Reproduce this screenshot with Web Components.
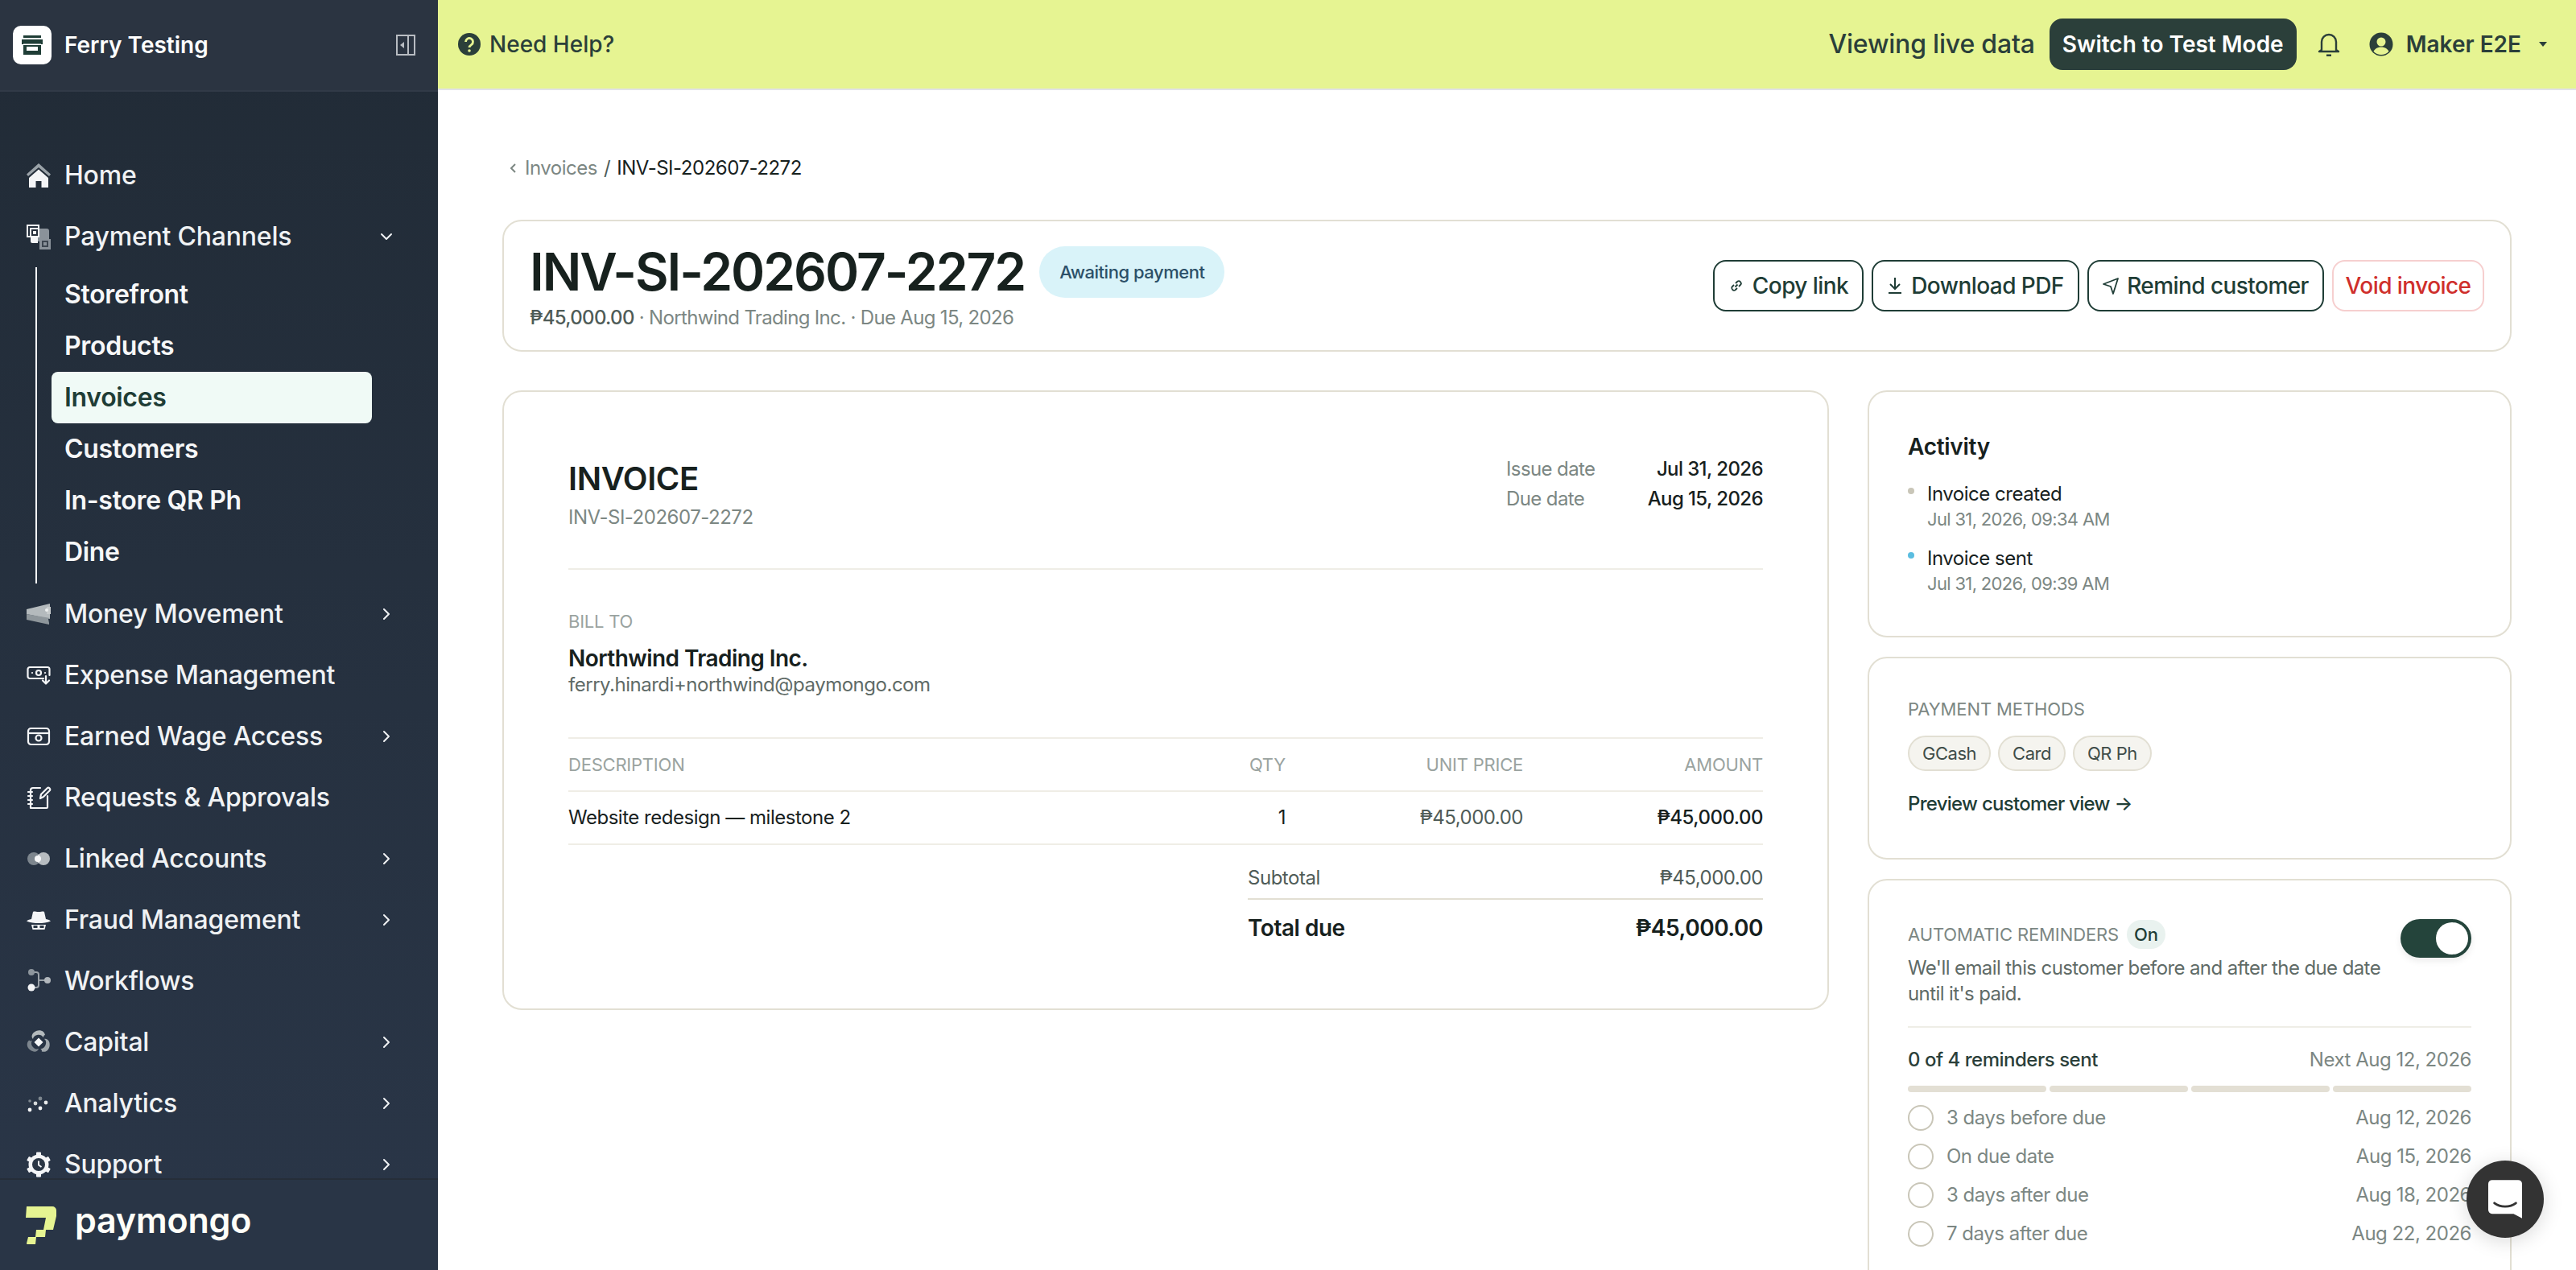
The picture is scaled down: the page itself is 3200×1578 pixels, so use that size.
<!DOCTYPE html>
<html><head><meta charset="utf-8"><title>Invoice</title>
<style>html,body{margin:0;height:100%;overflow:hidden;background:#fff;font-family:Inter,"Noto Sans",sans-serif}</style>
</head><body>
<app-shell></app-shell>
<script>
const BLADE='M13 2c5-2 10 0 11 5-1 0-2 1-2 3-2-3-5-4-8-3-3 .5-5 3-5 5-3-3-1-8 4-10z';
const ICONS={
home:`<path d="M16 1 1 14.500l2 2.500L16 6l13 11 2-2.500z" fill="#9aa2a8"/><path d="M16 8.500 4 19v12h8.500v-8h7v8H28V19z" fill="#f4f5f7"/>`,
channels:`<rect x="13" y="6" width="16" height="16" rx="3" fill="#8a929a"/><rect x="2" y="2" width="14" height="14" fill="none" stroke="#f4f5f7" stroke-width="2"/><rect x="5" y="5" width="12" height="12" fill="#f4f5f7"/><path d="M6 15h9v9H8a2 2 0 0 1-2-2z" fill="#f4f5f7"/><rect x="8" y="8" width="6" height="6" fill="none" stroke="#262f3b" stroke-width="2"/><rect x="17" y="19" width="14" height="13" fill="#8a929a"/><rect x="21" y="22" width="6" height="6" fill="none" stroke="#3d4650" stroke-width="2"/>`,
money:`<path d="M1 10 30 3v19L1 16z" fill="#b4babd"/><path d="M1 16l29 5-2 1 1 5v2L1 23z" fill="#8e969b"/><path d="M26 7h5v9h-5z" fill="#c8cccd"/><circle cx="26" cy="11" r="2" fill="#eef0f0"/>`,
expense:`<g fill="none" stroke="#f4f5f7" stroke-width="2.2" stroke-linecap="round" stroke-linejoin="round"><path d="M22 20H5a2.500 2.500 0 0 1-2.500-2.500v-9A2.500 2.500 0 0 1 5 6h22a2.500 2.500 0 0 1 2.500 2.500V16"/><circle cx="16" cy="13" r="3"/><path d="M8 13h.01M24 13h.01M25 17v9M21 22.500l4 4 4-4"/></g>`,
wage:`<g fill="none" stroke="#f4f5f7" stroke-width="2.200"><rect x="3" y="6" width="26" height="20" rx="3.500"/><path d="M3 12h26"/><circle cx="16" cy="18" r="3.500"/></g>`,
req:`<g fill="none" stroke="#f4f5f7" stroke-width="2.200" stroke-linecap="round" stroke-linejoin="round"><path d="M18 4H9a3 3 0 0 0-3 3v22a0 0 0 0 0 0 0h20a1 1 0 0 0 1-1V14"/><path d="M3 9h5M3 14h5M3 19h5M3 24h5"/><path d="M18 17l1-5 8-8c1.500-1 4 1 3 3l-8 8z"/></g>`,
linked:`<circle cx="10" cy="16" r="8" fill="#7d868e"/><circle cx="22" cy="16" r="8" fill="#b7bcc0"/><path d="M16 10.700a8 8 0 0 1 0 10.600 8 8 0 0 1 0-10.600z" fill="#f6f7f8"/><circle cx="15" cy="16" r="4" fill="#f6f7f8"/>`,
fraud:`<path d="M9 6c2-1 3 0 7 0s5-1 7 0l2 9c3 .500 5 1.500 6 2.500-4 2-10 2.500-15 2.500S5 19.500 1 17.500C2 16.500 4 15.500 7 15z" fill="#f4f5f7"/><path d="M7 22h18l-1.500 6h-15z" fill="#f4f5f7"/><rect x="9.500" y="23" width="5" height="3" fill="#2a3645"/><rect x="17.500" y="23" width="5" height="3" fill="#2a3645"/>`,
flow:`<path d="M10 5h3a3 3 0 0 1 3 3v13a3 3 0 0 1-3 3h-3M16 15h8" fill="none" stroke="#9aa1a8" stroke-width="2"/><circle cx="7" cy="5" r="4" fill="#8d959d"/><circle cx="27" cy="15" r="4" fill="#b2b7bc"/><circle cx="7" cy="24" r="4.500" fill="#f4f5f7"/>`,
capital:`<path d="${BLADE}" fill="#b4babd"/><path d="${BLADE}" fill="#a1a8ad" transform="rotate(120 16 16)"/><path d="${BLADE}" fill="#7d868e" transform="rotate(240 16 16)"/><path d="M16 10.500l5.500 5.500-5.500 5.500-5.500-5.500z" fill="#f6f7f8"/>`,
analytics:`<circle cx="5" cy="24" r="2.400" fill="#f4f5f7"/><circle cx="12" cy="16" r="2.400" fill="#d5d8da"/><circle cx="18" cy="22" r="2.400" fill="#f4f5f7"/><circle cx="18" cy="10" r="2.400" fill="#7d868e"/><circle cx="5" cy="13" r="1.800" fill="#7d868e"/><circle cx="25" cy="15" r="2.400" fill="#e8eaeb"/>`,
support:`<g fill="#f4f5f7"><circle cx="16" cy="16" r="12.500"/><g><rect x="13" y="0.500" width="6" height="6" rx="1"/><rect x="13" y="25.500" width="6" height="6" rx="1"/><rect x="13" y="0.500" width="6" height="6" rx="1" transform="rotate(60 16 16)"/><rect x="13" y="25.500" width="6" height="6" rx="1" transform="rotate(60 16 16)"/><rect x="13" y="0.500" width="6" height="6" rx="1" transform="rotate(120 16 16)"/><rect x="13" y="25.500" width="6" height="6" rx="1" transform="rotate(120 16 16)"/></g></g><circle cx="16" cy="16" r="8" fill="#2a3645"/><path d="M16 11.500v5l3.500 2.500" fill="none" stroke="#f4f5f7" stroke-width="2"/>`
};

class NavItem extends HTMLElement{
 connectedCallback(){ if(this.shadowRoot)return;
  const r=this.attachShadow({mode:'open'});
  const ic=this.getAttribute('icon'),ch=this.getAttribute('chev');
  r.innerHTML=`<style>
  :host{display:flex;align-items:center;height:76px;padding-left:32px;padding-right:56px;gap:16px;color:#f0f2f4;font:500 32px/40px Inter,sans-serif;letter-spacing:-.007em;flex:none}
  svg.i{width:32px;height:32px;flex:none}
  span{flex:1;white-space:nowrap}
  svg.c{width:20px;height:20px;flex:none;margin-right:-2px}
  </style><svg class="i" viewBox="0 0 32 32">${ICONS[ic]||''}</svg><span><slot></slot></span>${ch?`<svg class="c" viewBox="0 0 20 20" fill="none" stroke="#f0f2f4" stroke-width="2" stroke-linecap="round" stroke-linejoin="round"><path d="${ch==='down'?'M4 7l6 6 6-6':'M7 4l6 6-6 6'}"/></svg>`:''}`;
 }
}
customElements.define('nav-item',NavItem);
class SubItem extends HTMLElement{
 connectedCallback(){ if(this.shadowRoot)return;
  const r=this.attachShadow({mode:'open'});
  r.innerHTML=`<style>
  :host{display:flex;align-items:center;height:64px;width:398px;box-sizing:border-box;padding-left:16px;border-radius:8px;color:#f6f7f8;font:600 32px/40px Inter,sans-serif;letter-spacing:-.01em;white-space:nowrap}
  :host([active]){background:#f0faf6;color:#1f3d36}
  </style><slot></slot>`;
 }
}
customElements.define('sub-item',SubItem);

class SideBar extends HTMLElement{
 connectedCallback(){ if(this.shadowRoot)return;
  const r=this.attachShadow({mode:'open'});
  r.innerHTML=`<style>
  :host{display:flex;flex-direction:column;width:544px;height:100%;background:linear-gradient(#212b36,#2a3648);overflow:hidden;flex:none}
  header{height:112px;flex:none;display:flex;align-items:center;padding:0 28px 0 16px;gap:16px;background:#2b3441;border-bottom:2px solid #313a47;box-sizing:content-box}
  .logo{width:48px;height:48px;border-radius:10px;background:#fff;display:flex;align-items:center;justify-content:center;flex:none}
  .name{flex:1;color:#fff;font:600 28px/36px Inter,sans-serif;white-space:nowrap}
  nav{flex:1;min-height:0;overflow:hidden;padding-top:66px;display:flex;flex-direction:column}
  .subs{position:relative;display:flex;flex-direction:column;margin-left:64px;padding-top:2px;padding-bottom:7px;flex:none}
  .subs::before{content:"";position:absolute;left:-20px;top:0;bottom:0;width:2px;background:#f4f5f7}
  footer{flex:none;height:114px;border-top:2px solid #262e39;background:#293546;display:flex;align-items:center;padding-left:32px;gap:22px;box-sizing:border-box}
  .pm{color:#fffef8;font:600 43px/50px Inter,sans-serif;letter-spacing:-.2px;margin-top:-12px}
  </style>
  <header><div class="logo"><svg width="32" height="32" viewBox="0 0 32 32"><path d="M5 4h22v3H5zM3 9h26v6h-2v13H5V15H3z" fill="#1f3d36"/><rect x="9" y="18" width="14" height="5" fill="#fff"/><rect x="5" y="14.500" width="22" height="1.500" fill="#fff"/></svg></div>
  <div class="name">Ferry Testing</div>
  <svg width="24" height="26" viewBox="0 0 24 26" fill="none"><rect x="1" y="1" width="22" height="24" stroke="#b8bcc2" stroke-width="2"/><path d="M15 1v24" stroke="#b8bcc2" stroke-width="2"/><path d="M10 9v8l-5-4z" fill="#b8bcc2"/></svg></header>
  <nav>
   <nav-item icon="home">Home</nav-item>
   <nav-item icon="channels" chev="down">Payment Channels</nav-item>
   <div class="subs"><sub-item>Storefront</sub-item><sub-item>Products</sub-item><sub-item active>Invoices</sub-item><sub-item>Customers</sub-item><sub-item>In-store QR Ph</sub-item><sub-item>Dine</sub-item></div>
   <nav-item icon="money" chev="right">Money Movement</nav-item>
   <nav-item icon="expense">Expense Management</nav-item>
   <nav-item icon="wage" chev="right">Earned Wage Access</nav-item>
   <nav-item icon="req">Requests &amp; Approvals</nav-item>
   <nav-item icon="linked" chev="right">Linked Accounts</nav-item>
   <nav-item icon="fraud" chev="right">Fraud Management</nav-item>
   <nav-item icon="flow">Workflows</nav-item>
   <nav-item icon="capital" chev="right">Capital</nav-item>
   <nav-item icon="analytics" chev="right">Analytics</nav-item>
   <nav-item icon="support" chev="right">Support</nav-item>
  </nav>
  <footer><svg width="39" height="49" viewBox="0 0 39 49"><path d="M1 1h32a5 5 0 0 1 5 5v7l-4 17h-9l-1 9H13l-1 9H2a1 1 0 0 1-1-1l2-8h9l1-9h9l3-15H0z" fill="#e6f492"/></svg><div class="pm">paymongo</div></footer>`;
 }
}
customElements.define('side-bar',SideBar);

class TopBar extends HTMLElement{
 connectedCallback(){ if(this.shadowRoot)return;
  const r=this.attachShadow({mode:'open'});
  r.innerHTML=`<style>
  :host{display:flex;align-items:center;height:110px;flex:none;background:#e6f492;border-bottom:2px solid #e1e3e6;padding:0 36px 0 24px;color:#2b3f3a;font-family:Inter,sans-serif}
  .help{display:flex;align-items:center;gap:10px;font:500 28px/36px Inter,sans-serif;flex:1}
  .live{font:500 32px/40px Inter,sans-serif;margin-right:18px;letter-spacing:-.2px}
  .sw{background:#2b3f3a;color:#fff;height:64px;width:307px;border-radius:16px;font:600 28px/64px Inter,sans-serif;text-align:center;white-space:nowrap}
  .bell{margin:0 36px 0 26px}
  .maker{font:600 28px/36px Inter,sans-serif;margin-left:16px;white-space:nowrap}
  .caret{margin-left:22px}
  </style>
  <div class="help"><svg width="30" height="30" viewBox="0 0 30 30"><circle cx="15" cy="15" r="14" fill="#2b3f3a"/><path d="M10.500 12a4.500 4.500 0 1 1 7 3.700c-1.500 1-2.500 1.800-2.500 3.300" fill="none" stroke="#e6f492" stroke-width="2.800"/><circle cx="15" cy="23" r="1.800" fill="#e6f492"/></svg><span>Need Help?</span></div>
  <div class="live">Viewing live data</div><div class="sw">Switch to Test Mode</div>
  <svg class="bell" width="28" height="30" viewBox="0 0 28 30" fill="none" stroke="#2b3f3a" stroke-width="2.400" stroke-linejoin="round"><path d="M5 22V12a9 9 0 0 1 18 0v10l3 2H2z"/><path d="M11 29h6" stroke-width="3"/></svg>
  <svg width="30" height="30" viewBox="0 0 30 30"><circle cx="15" cy="15" r="14.500" fill="#2b3f3a"/><circle cx="15" cy="12" r="5.500" fill="#e6f492"/><path d="M5.500 24c2-4 5.500-5.500 9.500-5.500s7.500 1.500 9.500 5.500c-2.500 2.500-6 4-9.500 4s-7-1.500-9.500-4z" fill="#e6f492"/></svg>
  <div class="maker">Maker E2E</div>
  <svg class="caret" width="10" height="6" viewBox="0 0 10 6"><path d="M0 0h10L5 6z" fill="#2b3f3a"/></svg>`;
 }
}
customElements.define('top-bar',TopBar);

class UiCard extends HTMLElement{
 connectedCallback(){ if(this.shadowRoot)return;
  this.attachShadow({mode:'open'}).innerHTML=`<style>:host{display:block;box-sizing:border-box;border:2px solid #e2dfd3;border-radius:24px;background:#fff}</style><slot></slot>`;
 }
}
customElements.define('ui-card',UiCard);

class UiButton extends HTMLElement{
 connectedCallback(){ if(this.shadowRoot)return;
  const d=this.hasAttribute('danger');
  this.attachShadow({mode:'open'}).innerHTML=`<style>:host{display:inline-flex;align-items:center;justify-content:center;gap:10px;height:64px;box-sizing:border-box;border:2px solid ${d?'#f6cfcf':'#1f3d36'};border-radius:16px;color:${d?'#cf2f2c':'#1f3d36'};font:500 28px/36px var(--f);letter-spacing:var(--ls);white-space:nowrap;background:#fff}</style><slot name="i"></slot><slot></slot>`;
 }
}
customElements.define('ui-button',UiButton);

class ReminderRow extends HTMLElement{
 connectedCallback(){ if(this.shadowRoot)return;
  this.attachShadow({mode:'open'}).innerHTML=`<style>:host{display:flex;align-items:center;height:48px;color:#7c8783;font:400 24px/32px var(--f);letter-spacing:var(--ls)}
  i{width:28px;height:28px;border:2px solid #c9c6b8;border-radius:50%;flex:none;margin-right:16px}
  span{flex:1}b{font-weight:400}</style><i></i><span><slot></slot></span><b>${this.getAttribute('date')}</b>`;
 }
}
customElements.define('reminder-row',ReminderRow);

class InvoicePage extends HTMLElement{
 connectedCallback(){ if(this.shadowRoot)return;
  const r=this.attachShadow({mode:'open'});
  r.innerHTML=`<style>
  :host{display:block;--f:Inter,sans-serif;--ls:-.02em;padding:80px 80px 0;font:400 24px/32px var(--f);letter-spacing:var(--ls);color:#17211e;flex:1;min-height:0;overflow:hidden}
  .crumb{display:flex;align-items:center;gap:8px;height:32px;color:#7c8783;margin-top:1px;padding-left:8px}
  .crumb b{font-weight:400;color:#17211e}
  .hd{margin-top:48px;height:164px;display:flex;align-items:flex-start;justify-content:space-between;padding:31px 32px 0}
  h1{font:600 64px/72px var(--f);letter-spacing:-.032em;margin:0;white-space:nowrap}
  .hl{display:flex;flex-direction:column}
  .tt{display:flex;align-items:center;gap:18px;height:64px}
  .badge{background:#d9f3f9;color:#2c5068;height:64px;border-radius:32px;padding:0 25px;font:500 22px/64px var(--f);white-space:nowrap}
  .sub{color:#7c8783;white-space:nowrap;margin-top:9px;letter-spacing:-.028em}
  .sub b{font-weight:500;color:#4f5c58}
  .acts{display:flex;gap:10px;margin-top:17px}
  .cols{display:grid;grid-template-columns:1fr 800px;gap:48px;margin-top:48px;align-items:start}
  .inv{height:770px;padding:80px 80px 0;display:flex;flex-direction:column}
  .top{display:flex;justify-content:space-between;height:139px;border-bottom:2px solid #efede6;box-sizing:content-box}
  h2{font:600 40px/56px var(--f);margin:0;letter-spacing:-.01em}
  .muted{color:#7c8783}
  .meta{display:grid;grid-template-columns:1fr auto;width:319px;row-gap:4px;margin-top:0;height:70px;letter-spacing:-.025em}
  .meta span{color:#7c8783}.meta b{font-weight:500;text-align:right}
  .lab{font:400 22px/28px var(--f);letter-spacing:-.01em;color:#9aa3a0}
  .bill{padding-top:50px;height:158px;box-sizing:content-box}
  .nm{font:600 28px/36px var(--f);margin-top:14px;letter-spacing:-.02em}
  table{border-collapse:collapse;width:100%;border-top:2px solid #efede6}
  th{font:400 22px/28px var(--f);letter-spacing:-.01em;color:#9aa3a0;height:64px;padding:0;text-align:right;border-bottom:2px solid #efede6}
  td{height:64px;padding:0;text-align:right;border-bottom:2px solid #efede6}
  th:first-child,td:first-child{text-align:left}
  .tot{margin-left:auto;width:640px}
  .tot div{display:flex;justify-content:space-between;align-items:center}
  .st{height:50px;padding-top:16px;border-bottom:2px solid #e2dfd3;color:#4f5c58}
  .td{height:70px;font:600 28px/36px var(--f)}
  .side{display:flex;flex-direction:column;gap:24px}
  .act{height:307px;padding:50px 48px 0}
  h3{font:600 28px/36px var(--f);margin:0 0 25px;letter-spacing:-.01em}
  .ev{position:relative;padding-left:24px;margin-bottom:17px}
  .ev i{position:absolute;left:0;top:8px;width:8px;height:8px;border-radius:50%}
  .ev small{display:block;font-size:22px;line-height:31px;color:#7c8783;letter-spacing:-.03em}
  .pay{height:252px;padding:49px 48px 0}
  .pl{font:400 22px/28px var(--f);letter-spacing:-.005em;color:#7c8783}
  .chips{display:flex;gap:9px;margin-top:19px}
  .chips span{height:44px;box-sizing:border-box;border:2px solid #e2dfd3;border-radius:22px;background:#f5f4ef;padding:0 16px;font:400 22px/40px var(--f);color:#3f4d49}
  .pv{margin-top:25px;font-weight:500;color:#1f3d36;letter-spacing:-.03em}
  .rem{height:600px;padding:49px 48px 0}
  .rh{display:flex;justify-content:space-between;align-items:flex-start;padding-bottom:24px;border-bottom:2px solid #efede6}
  .on{display:inline-block;background:#e9f2ef;color:#1f3d36;border-radius:18px;padding:0 9px;height:36px;font:500 22px/36px var(--f);margin-left:10px}
  .rl{display:flex;align-items:center;color:#7c8783;font-size:22px;line-height:36px;letter-spacing:-.005em;height:36px}
  .desc{color:#5f6b67;margin-top:8px;width:600px;letter-spacing:-.025em}
  .tog{width:88px;height:48px;border-radius:24px;background:#24443b;position:relative;flex:none;box-shadow:0 4px 8px rgba(0,0,0,.08);margin-top:-1px}
  .tog::after{content:"";position:absolute;right:4px;top:4px;width:40px;height:40px;border-radius:50%;background:#fff}
  .cnt{display:flex;justify-content:space-between;margin-top:24px;height:32px;color:#2b3f3a;font-weight:500}
  .cnt span{color:#7c8783;font-weight:400}
  .bars{display:grid;grid-template-columns:repeat(4,1fr);gap:4px;margin:16px 0 8px}
  .bars i{height:8px;border-radius:4px;background:#e3dfd4}
  .chat{position:absolute;right:40px;bottom:40px;width:96px;height:96px;border-radius:50%;background:#333;box-shadow:0 4px 24px rgba(0,0,0,.15);display:flex;align-items:center;justify-content:center}
  </style>
  <div class="crumb"><svg width="12" height="16" viewBox="0 0 12 16" fill="none" stroke="#7c8783" stroke-width="2"><path d="M8 3 3 8l5 5"/></svg><span>Invoices</span><span style="color:#4f5c58">/</span><b>INV-SI-202607-2272</b></div>
  <ui-card class="hd">
    <div class="hl"><div class="tt"><h1>INV-SI-202607-2272</h1><div class="badge">Awaiting payment</div></div>
    <div class="sub"><b>₱45,000.00</b> · Northwind Trading Inc. · Due Aug 15, 2026</div></div>
    <div class="acts">
      <ui-button style="width:187px"><svg slot="i" width="20" height="20" viewBox="0 0 20 20" fill="none" stroke="#1f3d36" stroke-width="1.800"><path d="M8.500 11.500l3-3M7 9l-2.500 2.500a3 3 0 0 0 4 4L11 13M9 7l2.500-2.500a3 3 0 0 1 4 4L13 11"/></svg>Copy link</ui-button>
      <ui-button style="width:258px"><svg slot="i" width="20" height="22" viewBox="0 0 20 22" fill="none" stroke="#1f3d36" stroke-width="2"><path d="M10 1v13M4 9l6 6 6-6M2 20h16"/></svg>Download PDF</ui-button>
      <ui-button style="width:294px"><svg slot="i" width="20" height="22" viewBox="0 0 20 22" fill="none" stroke="#1f3d36" stroke-width="1.800" stroke-linejoin="round"><path d="M19 2 1 9l9 3 3 9z"/></svg>Remind customer</ui-button>
      <ui-button danger style="width:189px">Void invoice</ui-button>
    </div>
  </ui-card>
  <div class="cols">
   <ui-card class="inv">
    <div class="top"><div><h2>INVOICE</h2><div class="muted" style="margin-top:4px">INV-SI-202607-2272</div></div>
     <div class="meta"><span>Issue date</span><b>Jul 31, 2026</b><span>Due date</span><b>Aug 15, 2026</b></div></div>
    <div class="bill"><div class="lab">BILL TO</div><div class="nm">Northwind Trading Inc.</div><div style="color:#5f6b67;margin-top:-1px">ferry.hinardi+northwind@paymongo.com</div></div>
    <table><tr><th>DESCRIPTION</th><th style="width:120px">QTY</th><th style="width:295px">UNIT PRICE</th><th style="width:298px">AMOUNT</th></tr>
    <tr><td>Website redesign — milestone 2</td><td>1</td><td style="color:#4f5c58">₱45,000.00</td><td style="font-weight:500">₱45,000.00</td></tr></table>
    <div class="tot"><div class="st"><span>Subtotal</span><span>₱45,000.00</span></div><div class="td"><span>Total due</span><span>₱45,000.00</span></div></div>
   </ui-card>
   <div class="side">
    <ui-card class="act"><h3>Activity</h3>
      <div class="ev"><i style="background:#c9c6b8"></i>Invoice created<small>Jul 31, 2026, 09:34 AM</small></div>
      <div class="ev"><i style="background:#5bbde0"></i>Invoice sent<small>Jul 31, 2026, 09:39 AM</small></div>
    </ui-card>
    <ui-card class="pay"><div class="pl">PAYMENT METHODS</div><div class="chips"><span>GCash</span><span>Card</span><span>QR Ph</span></div><div class="pv">Preview customer view →</div></ui-card>
    <ui-card class="rem">
      <div class="rh"><div><div class="rl">AUTOMATIC REMINDERS<span class="on">On</span></div><div class="desc">We'll email this customer before and after the due date until it's paid.</div></div><div class="tog"></div></div>
      <div class="cnt">0 of 4 reminders sent<span>Next Aug 12, 2026</span></div>
      <div class="bars"><i></i><i></i><i></i><i></i></div>
      <reminder-row date="Aug 12, 2026">3 days before due</reminder-row>
      <reminder-row date="Aug 15, 2026">On due date</reminder-row>
      <reminder-row date="Aug 18, 2026">3 days after due</reminder-row>
      <reminder-row date="Aug 22, 2026">7 days after due</reminder-row>
    </ui-card>
   </div>
  </div>
  <div class="chat"><svg width="42" height="48" viewBox="0 0 44 50"><path d="M5 0h34a5 5 0 0 1 5 5v45l-11-6H5a5 5 0 0 1-5-5V5a5 5 0 0 1 5-5z" fill="#fff"/><path d="M8 30c8 6 20 6 28 0" fill="none" stroke="#333" stroke-width="3" stroke-linecap="round"/></svg></div>`;
 }
}
customElements.define('invoice-page',InvoicePage);

class AppShell extends HTMLElement{
 connectedCallback(){ if(this.shadowRoot)return;
  this.attachShadow({mode:'open'}).innerHTML=`<style>:host{display:flex;width:100vw;height:100vh;overflow:hidden;position:relative}
  .main{flex:1;display:flex;flex-direction:column;min-width:0}</style><side-bar></side-bar><div class="main"><top-bar></top-bar><invoice-page></invoice-page></div>`;
 }
}
customElements.define('app-shell',AppShell);
</script>
</body></html>
